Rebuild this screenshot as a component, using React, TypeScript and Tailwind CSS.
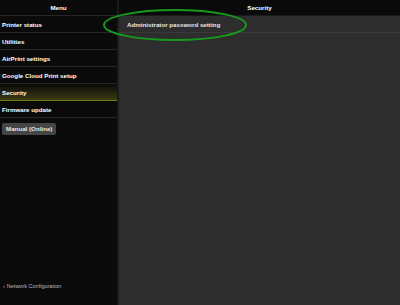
import React from 'react'

// Printer web UI — Security page

const menuItems = [
  'Printer status',
  'Utilities',
  'AirPrint settings',
  'Google Cloud Print setup',
  'Security',
  'Firmware update',
]

export default function App() {
  return (
    <div
      className="relative flex h-[305px] w-[400px] overflow-hidden bg-[#0a0a0a] text-white"
      style={{ fontFamily: '"Liberation Sans", Arial, sans-serif' }}
    >
      {/* Sidebar */}
      <aside className="flex w-[119px] shrink-0 flex-col border-r-2 border-[#1b1b1b] bg-[#0a0a0a]">
        <div className="flex h-[16px] items-center justify-center border-b border-[#262626] pt-[1px] text-[6.2px] leading-none font-bold">
          Menu
        </div>
        <nav className="flex flex-col">
          {menuItems.map((item) => (
            <div
              key={item}
              className={
                item === 'Security'
                  ? 'flex h-[17px] items-center border-b border-[#77771c] bg-gradient-to-b from-[#0a0a0a] to-[#3c3c10] px-[2px] pt-[2px] text-[6.2px] leading-none font-bold'
                  : 'flex h-[17px] items-center border-b border-[#262626] px-[2px] pt-[2px] text-[6.2px] leading-none font-bold'
              }
            >
              {item}
            </div>
          ))}
        </nav>
        <div className="flex px-[2px] pt-[5px]">
          <button className="flex h-[12px] items-center rounded-[2px] bg-[#454545] px-[4px] text-[6.2px] leading-none font-bold text-[#e5e5e5]">
            Manual (Online)
          </button>
        </div>
        <div className="mt-auto mb-[16px] flex items-center gap-[2px] px-[3px] text-[5.5px] leading-none text-[#bdbdbd]">
          <span>›</span>
          <span>Network Configuration</span>
        </div>
      </aside>

      {/* Content */}
      <main className="flex flex-1 flex-col bg-[#2d2d2d]">
        <div className="flex h-[16px] items-center justify-center border-b border-[#1a1a1a] bg-[#0a0a0a] pt-[1px] text-[6.2px] leading-none font-bold">
          Security
        </div>
        <div className="flex h-[17px] items-center border-b border-[#3a3a3a] px-[8px] pt-[2px] text-[6.2px] leading-none font-bold text-[#e8e8e8]">
          Administrator password setting
        </div>
      </main>

      {/* Annotation ellipse */}
      <svg className="pointer-events-none absolute left-[102px] top-[8px]" width="146" height="34" viewBox="0 0 146 34">
        <ellipse cx="73" cy="17" rx="71" ry="15" fill="none" stroke="#159a1d" strokeWidth="2" />
      </svg>
    </div>
  )
}
